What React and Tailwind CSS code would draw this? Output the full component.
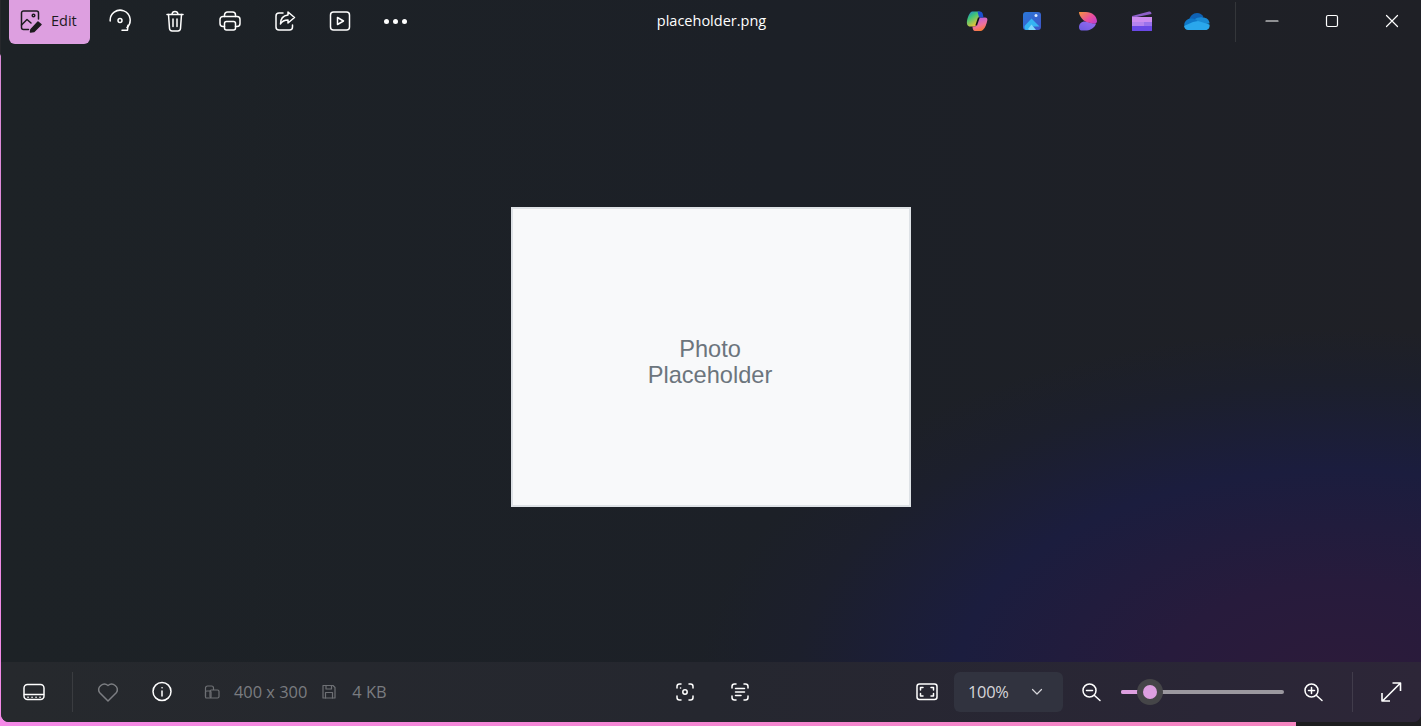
import React from 'react';

const Glyph = ({ size = 24, children, className = 'text-white' }) => (
  <svg
    width={size}
    height={size}
    viewBox={`0 0 ${size} ${size}`}
    fill="none"
    stroke="currentColor"
    strokeWidth="1.5"
    strokeLinecap="round"
    strokeLinejoin="round"
    className={`shrink-0 ${className}`}
  >
    {children}
  </svg>
);

const ToolButton = ({ children }) => (
  <div className="w-[55px] h-11 pb-[2px] flex items-center justify-center shrink-0">{children}</div>
);

const WinButton = ({ children }) => (
  <div className="w-[60px] h-11 pb-[3px] flex items-center justify-center shrink-0">{children}</div>
);

const App = () => {
  return (
    <div
      className="w-[1421px] h-[726px] overflow-hidden flex flex-col bg-[linear-gradient(to_right,#f48ae8_0px,#f585c0_1296px,#1d1d1f_1296px)]"
      style={{ fontFamily: '"Open Sans", "Noto Sans", sans-serif' }}
    >
      <div className="flex h-[722px] shrink-0">
        {/* Window edge */}
        <div className="w-px shrink-0 bg-[linear-gradient(to_bottom,#26282c_0px,#26282c_54px,#d98ad6_56px,#f48ae8_100%)]" />

        <div className="flex-1 min-w-0 flex flex-col rounded-b-lg overflow-hidden bg-[radial-gradient(ellipse_640px_350px_at_1340px_680px,#2c1b3a_0%,#271b3c_28%,#1b1d3e_60%,#1c1f2c_85%,transparent_100%),linear-gradient(to_right,#1d2226,#1c2027_55%,#1f2026)]">
          {/* Top bar */}
          <div className="h-11 shrink-0 grid grid-cols-[1fr_auto_1fr] items-center">
            <div className="flex items-center pl-2">
              <div className="w-[81px] h-11 pb-[2px] rounded-b-md bg-[#dd9fe0] flex items-center gap-2 pl-[10px] text-[#1c1a1e] text-[14.5px] shrink-0 mr-[2px]">
                <Glyph size={24} className="text-[#1c1a1e]">
                  <path d="M9.500 20.500H4.500a2 2 0 0 1-2-2V4a2 2 0 0 1 2-2h13a2 2 0 0 1 2 2v6" />
                  <path d="M2.500 16l5.500-5.500 4 3.500" />
                  <circle cx="14.500" cy="6.500" r="1.300" />
                  <path d="M12 20.500l7-7.500 3 2.500-7 7-3.500.5z" fill="currentColor" />
                </Glyph>
                <span>Edit</span>
              </div>
              <ToolButton>
                <Glyph>
                  <path d="M2.200 12A10 10 0 1 1 19 18.500" />
                  <circle cx="12" cy="11.500" r="2" />
                  <path d="M14 21.200h5.500l.5-5" />
                </Glyph>
              </ToolButton>
              <ToolButton>
                <Glyph>
                  <path d="M4 5.500h16" />
                  <path d="M9 5.200c.2-1.700 1.400-2.700 3-2.700s2.800 1 3 2.700" />
                  <path d="M5.500 5.500l1 14a2.600 2.600 0 0 0 2.600 2.400h5.800a2.600 2.600 0 0 0 2.600-2.400l1-14" />
                  <path d="M10 10v7.500M14 10v7.500" />
                </Glyph>
              </ToolButton>
              <ToolButton>
                <Glyph>
                  <path d="M6.500 7.500V6a3 3 0 0 1 3-3h5a3 3 0 0 1 3 3v1.500" />
                  <path d="M6.500 17.500H5a3 3 0 0 1-3-3V10.500a3 3 0 0 1 3-3h14a3 3 0 0 1 3 3v4a3 3 0 0 1-3 3h-1.500" />
                  <rect x="6.500" y="12.500" width="11" height="8.500" rx="2" />
                </Glyph>
              </ToolButton>
              <ToolButton>
                <Glyph>
                  <path d="M10 4H6a3 3 0 0 0-3 3v11a3 3 0 0 0 3 3h10.500a3 3 0 0 0 3-3v-2" />
                  <path d="M15 3l6.500 5.500L15 14v-3c-3.500 0-6 1.200-7.500 4 0-5 2.500-8.500 7.500-9z" />
                </Glyph>
              </ToolButton>
              <ToolButton>
                <Glyph>
                  <rect x="2.500" y="3" width="19" height="18" rx="3" />
                  <path d="M9.500 8.500v7l6-3.500z" />
                </Glyph>
              </ToolButton>
              <ToolButton>
                <div className="flex gap-[4px] pl-[1px]">
                  <span className="w-[5px] h-[5px] rounded-full bg-white" />
                  <span className="w-[5px] h-[5px] rounded-full bg-white" />
                  <span className="w-[5px] h-[5px] rounded-full bg-white" />
                </div>
              </ToolButton>
            </div>

            <div className="text-[14.5px] text-white whitespace-nowrap pb-[2px] pl-[1px]">placeholder.png</div>

            <div className="flex items-center justify-end -mr-px">
              <ToolButton>
                <svg width="22" height="22" viewBox="0 0 22 22">
                  <defs>
                    <linearGradient id="cpA" x1="0" y1="0" x2="0.6" y2="1">
                      <stop offset="0" stopColor="#1e73e8" />
                      <stop offset="0.4" stopColor="#3cc47a" />
                      <stop offset="1" stopColor="#f7c52e" />
                    </linearGradient>
                    <linearGradient id="cpB" x1="0.2" y1="0" x2="0.6" y2="1">
                      <stop offset="0" stopColor="#b05ee8" />
                      <stop offset="0.6" stopColor="#f0709a" />
                      <stop offset="1" stopColor="#f77a2e" />
                    </linearGradient>
                  </defs>
                  <path d="M6 1.500h7c1 0 1.500.8 1.200 1.600L11 14.500 9.500 16.500H4C1.500 16.500 .5 14 1 11 1.500 8 3.500 2 6 1.500z" fill="url(#cpA)" />
                  <path d="M6.500 16.500h3l3.500-9h6c1.800 0 2.800 1.300 2.300 3-.8 3.500-1.800 7-4 9-1 1-2 1.500-3.500 1.500H9c-1.500 0-2.500-2-2.500-4.500z" fill="url(#cpB)" />
                  <path d="M11.500 1.500h2.500c1.500 0 2.500 1 2.800 2.500l.7 3.500h-4.500z" fill="#1a4fd0" />
                  <path d="M12 7.500h1.800L11 15.500H9.300z" fill="#111317" />
                </svg>
              </ToolButton>
              <ToolButton>
                <svg width="18" height="18" viewBox="0 0 18 18">
                  <defs>
                    <linearGradient id="phA" x1="0" y1="0" x2="1" y2="1">
                      <stop offset="0" stopColor="#2a78d8" />
                      <stop offset="1" stopColor="#3f55c8" />
                    </linearGradient>
                  </defs>
                  <rect width="18" height="18" rx="3" fill="url(#phA)" />
                  <circle cx="13" cy="3.500" r="1.500" fill="#dbeafe" />
                  <path d="M1.500 14L8.500 6.500l8 8H9L5.500 18H3.500a2 2 0 0 1-2-2z" fill="#35b4f2" />
                  <path d="M5 17l3.500-4.500 4.500 5.500H6z" fill="#7fd6fb" />
                </svg>
              </ToolButton>
              <ToolButton>
                <svg width="20" height="20" viewBox="0 0 20 20" className="ml-[3px]">
                  <defs>
                    <linearGradient id="dsA" x1="0" y1="0" x2="1" y2="0.800">
                      <stop offset="0" stopColor="#f6963c" />
                      <stop offset="0.6" stopColor="#ea4e9d" />
                      <stop offset="1" stopColor="#c43fc8" />
                    </linearGradient>
                    <linearGradient id="dsB" x1="0" y1="1" x2="1" y2="0">
                      <stop offset="0" stopColor="#6d5be0" />
                      <stop offset="1" stopColor="#9a6cf0" />
                    </linearGradient>
                  </defs>
                  <path d="M1 16C1 13 3 10.500 7 10.500 10 10.500 14 13 18 12.500 17 16.500 13 19 9 19.500H3.500C2 19.500 1 18 1 16z" fill="url(#dsB)" />
                  <path d="M1 1H8C14 1 19 5 19 10.500 19 12 17 13 15 12.500 11 11.500 6 11 3.500 7 2 5 1 3 1 1z" fill="url(#dsA)" />
                </svg>
              </ToolButton>
              <ToolButton>
                <svg width="20" height="20" viewBox="0 0 20 20">
                  <path d="M0 5l17-4.500c1.500-.4 2.500.5 2.500 2.500L0 7z" fill="#8d5fc8" />
                  <rect x="0" y="6" width="20" height="14" rx="1" fill="#7a58e8" />
                  <rect x="0" y="6" width="20" height="5" fill="#cc8cf0" />
                  <rect x="0" y="11" width="12" height="4" fill="#b583ee" />
                  <rect x="12" y="11" width="8" height="4" fill="#9a72ec" />
                  <rect x="0" y="15" width="20" height="5" rx="1" fill="#6a48e6" />
                </svg>
              </ToolButton>
              <ToolButton>
                <svg width="26" height="17" viewBox="0 0 26 17">
                  <path d="M5 7C6 3 9 0 13 0c3 0 5 1.500 6.500 4l-6 5z" fill="#0f62b4" />
                  <path d="M19 4.500c3 0 6.500 2 6.500 6l-7 1-8-5c2-2 5.500-2.500 8.500-2z" fill="#1a8ad4" />
                  <path d="M7 5.500c3-.3 5 1 7 3l-5.500 5-8-.5C-.5 9.500 2.500 5.700 7 5.500z" fill="#0f78c8" />
                  <path d="M4 17c-2 0-3.500-1.500-4-4l9-4 5-1 11.500 3.500c.5 3-1 5.500-4 5.500z" fill="#2aa7ec" />
                </svg>
              </ToolButton>
              <div className="w-px h-10 bg-[#34363a] ml-[11px] mr-[6px] shrink-0" />
              <WinButton>
                <Glyph size={14}><path d="M1 7h12" strokeWidth="1.200" /></Glyph>
              </WinButton>
              <WinButton>
                <Glyph size={14}><rect x="1.500" y="1.500" width="11" height="11" rx="1.500" strokeWidth="1.200" /></Glyph>
              </WinButton>
              <WinButton>
                <Glyph size={14}><path d="M1.500 1.500l11 11M12.500 1.500l-11 11" strokeWidth="1.200" /></Glyph>
              </WinButton>
            </div>
          </div>

          {/* Photo */}
          <div className="flex-1 min-h-0 pt-2 flex items-center justify-center">
            <div className="w-[400px] h-[300px] pt-[10px] pr-[2px] bg-[#f8f9fa] border-2 border-[#dee2e6] flex items-center justify-center text-center text-[23.6px] leading-[26px] text-[#6c757d]" style={{ fontFamily: '"Liberation Sans", Arial, sans-serif' }}>
              <div>Photo<br />Placeholder</div>
            </div>
          </div>

          {/* Bottom bar */}
          <div className="h-[60px] shrink-0 grid grid-cols-[1fr_auto_1fr] items-center bg-[linear-gradient(to_right,#26292d,#25272f_50%,#2a2636_85%,#2d2638)]">
            <div className="flex items-center pl-[21px]">
              <Glyph size={24}>
                <rect x="2" y="4.500" width="20" height="15" rx="3.500" />
                <path d="M2.500 14.500h19" />
                <path d="M6 17.200h.1M10 17.200h.1M14 17.200h.1M18 17.200h.1" strokeWidth="1.600" />
              </Glyph>
              <div className="w-px h-10 bg-[#3a3c40] ml-[26px] mr-[23px]" />
              <Glyph size={24} className="text-[#7c7e82]">
                <path d="M12 21L3.500 12.500A5.600 5.600 0 0 1 12 5.500a5.600 5.600 0 0 1 8.500 7z" />
              </Glyph>
              <div className="ml-[31px]">
                <Glyph size={22}>
                  <circle cx="11" cy="10.500" r="9" />
                  <path d="M11 10v5" />
                  <path d="M11 6.800h.1" />
                </Glyph>
              </div>
              <div className="ml-[31px]">
                <Glyph size={16} className="text-[#6e7074]">
                  <path d="M1.500 12.500V4a2 2 0 0 1 2-2h4a2 2 0 0 1 2 2v1.500" strokeWidth="1.200" />
                  <rect x="6" y="6" width="9" height="8" rx="1.500" strokeWidth="1.200" />
                  <rect x="1.500" y="7" width="5.500" height="7" rx="1" strokeWidth="1.200" />
                </Glyph>
              </div>
              <span className="ml-[14px] pt-px text-[16.4px] text-[#7a7c80] whitespace-nowrap">400 x 300</span>
              <div className="ml-[14px]">
                <Glyph size={16} className="text-[#6e7074]">
                  <path d="M2 1.500h10l2 2v10.500h-12z" strokeWidth="1.200" />
                  <path d="M5 1.500v3.500h5.500v-3.500M4.500 14v-5.500h7v5.500" strokeWidth="1.200" />
                </Glyph>
              </div>
              <span className="ml-[15px] pt-px text-[16.4px] text-[#7a7c80] whitespace-nowrap">4 KB</span>
            </div>

            <div className="flex items-center gap-[31px] ml-[2px]">
              <Glyph size={24}>
                <path d="M4 8V6.500A2.500 2.500 0 0 1 6.500 4H8M16 4h1.500A2.500 2.500 0 0 1 20 6.500V8M20 16v1.500a2.500 2.500 0 0 1-2.500 2.500H16M8 20H6.500A2.500 2.500 0 0 1 4 17.500V16" />
                <circle cx="12" cy="12" r="2.200" />
                <path d="M7.500 8h.1" />
              </Glyph>
              <Glyph size={24}>
                <path d="M4 8V6.500A2.500 2.500 0 0 1 6.500 4H8M16 4h1.500A2.500 2.500 0 0 1 20 6.500V8M20 16v1.500a2.500 2.500 0 0 1-2.500 2.500H16M8 20H6.500A2.500 2.500 0 0 1 4 17.500V16" />
                <path d="M7.500 8.500h9M7.500 12h9M7.500 15.500h5.500" />
              </Glyph>
            </div>

            <div className="flex items-center justify-end">
              <Glyph size={24}>
                <rect x="2" y="4" width="20" height="15.500" rx="2.500" />
                <path d="M5.500 10V7.500H8M16 7.500h2.500V10M18.500 13.500V16H16M8 16H5.500v-2.500" />
              </Glyph>
              <div className="ml-[15px] w-[109px] h-10 rounded-md bg-[#31333f] flex items-center pl-[14px] text-[16.4px] text-[#d6d6da] tracking-[-0.3px]">
                <span>100%</span>
                <svg width="12" height="8" viewBox="0 0 12 8" fill="none" stroke="#d6d6da" strokeWidth="1.200" strokeLinecap="round" strokeLinejoin="round" className="ml-[23px]">
                  <path d="M1.500 1.500L6 6l4.500-4.500" />
                </svg>
              </div>
              <div className="ml-4">
                <Glyph size={24}>
                  <circle cx="10.500" cy="10.500" r="6.500" />
                  <path d="M7.500 10.500h6M15.500 15.500L21 20.500" />
                </Glyph>
              </div>
              {/* Zoom slider */}
              <div className="relative ml-[18px] w-[163px] h-1 rounded-full bg-[#9b989f]">
                <div className="h-1 w-[28px] rounded-l-full bg-[#dd9fe0]" />
                <div className="absolute left-[16px] -top-[11px] w-[26px] h-[26px] rounded-full bg-[#454548] flex items-center justify-center">
                  <div className="w-[14px] h-[14px] rounded-full bg-[#dd9fe0]" />
                </div>
              </div>
              <div className="ml-[17px]">
                <Glyph size={24}>
                  <circle cx="10.500" cy="10.500" r="6.500" />
                  <path d="M7.500 10.500h6M10.500 7.500v6M15.500 15.500L21 20.500" />
                </Glyph>
              </div>
              <div className="w-px h-10 bg-[#413c4b] ml-[27px] mr-[26px]" />
              <Glyph size={24} className="text-white mr-[18px]">
                <path d="M13.500 3h8v8M21 3.500L3.500 21M3 13v8h8" strokeWidth="1.600" strokeLinecap="butt" />
              </Glyph>
            </div>
          </div>
        </div>
      </div>
    </div>
  );
};

export default App;
